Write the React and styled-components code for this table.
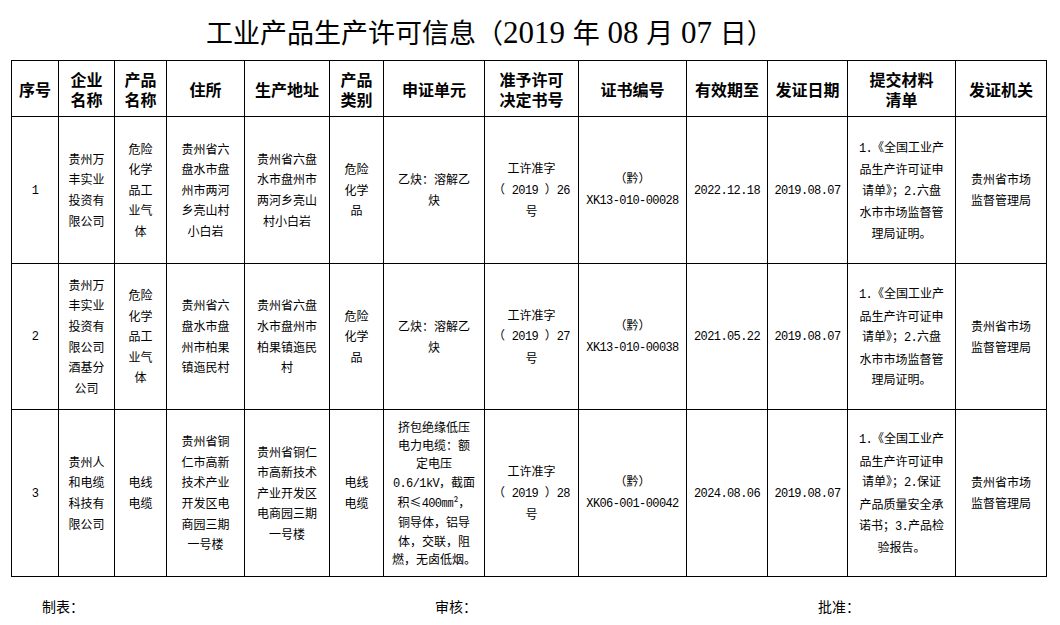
import React from "react";
import styled, { createGlobalStyle } from "styled-components";

const CJK = `"Noto Sans CJK SC", "Noto Sans", sans-serif`;
const COLS = [47, 56, 52, 78, 85, 54, 101, 94, 108, 81, 80, 108, 91];

const HEAD = [
  ["序号"],
  ["企业", "名称"],
  ["产品", "名称"],
  ["住所"],
  ["生产地址"],
  ["产品", "类别"],
  ["申证单元"],
  ["准予许可", "决定书号"],
  ["证书编号"],
  ["有效期至"],
  ["发证日期"],
  ["提交材料", "清单"],
  ["发证机关"],
];

const MATERIALS_LPS = ["1.《全国工业产", "品生产许可证申", "请单》；2.六盘", "水市市场监督管", "理局证明。"];
const AUTHORITY = ["贵州省市场", "监督管理局"];

const ROWS = [
  [
    ["1"],
    ["贵州万", "丰实业", "投资有", "限公司"],
    ["危险", "化学", "品工", "业气", "体"],
    ["贵州省六", "盘水市盘", "州市两河", "乡亮山村", "小白岩"],
    ["贵州省六盘", "水市盘州市", "两河乡亮山", "村小白岩"],
    ["危险", "化学", "品"],
    ["乙炔：溶解乙", "炔"],
    ["工许准字", "（ 2019 ）26", "号"],
    ["（黔）", "XK13-010-00028"],
    ["2022.12.18"],
    ["2019.08.07"],
    MATERIALS_LPS,
    AUTHORITY,
  ],
  [
    ["2"],
    ["贵州万", "丰实业", "投资有", "限公司", "酒基分", "公司"],
    ["危险", "化学", "品工", "业气", "体"],
    ["贵州省六", "盘水市盘", "州市柏果", "镇迤民村"],
    ["贵州省六盘", "水市盘州市", "柏果镇迤民", "村"],
    ["危险", "化学", "品"],
    ["乙炔：溶解乙", "炔"],
    ["工许准字", "（ 2019 ）27", "号"],
    ["（黔）", "XK13-010-00038"],
    ["2021.05.22"],
    ["2019.08.07"],
    MATERIALS_LPS,
    AUTHORITY,
  ],
  [
    ["3"],
    ["贵州人", "和电缆", "科技有", "限公司"],
    ["电线", "电缆"],
    ["贵州省铜", "仁市高新", "技术产业", "开发区电", "商园三期", "一号楼"],
    ["贵州省铜仁", "市高新技术", "产业开发区", "电商园三期", "一号楼"],
    ["电线", "电缆"],
    ["挤包绝缘低压", "电力电缆：额", "定电压", "0.6/1kV，截面", "积≤400㎜²，", "铜导体，铝导", "体，交联，阻", "燃，无卤低烟。"],
    ["工许准字", "（ 2019 ）28", "号"],
    ["（黔）", "XK06-001-00042"],
    ["2024.08.06"],
    ["2019.08.07"],
    ["1.《全国工业产", "品生产许可证申", "请单》；2.保证", "产品质量安全承", "诺书；3.产品检", "验报告。"],
    AUTHORITY,
  ],
];

// ascii runs get their own face (half-width digits in the sheet, Times-like in the title)
const split = (s, Wrap) =>
  s.split(/([\x20-\x7e]+)/).map((part, i) =>
    /^[\x20-\x7e]+$/.test(part) ? <Wrap key={i}>{part}</Wrap> : part
  );

export default function App() {
  return (
    <Page>
      <GlobalStyle />
      <Title>{split("工业产品生产许可信息（2019 年 08 月 07 日）", TitleNum)}</Title>
      <Sheet>
        {HEAD.map((lines, c) => (
          <HeadCell key={"h" + c}>
            {lines.map((l) => <Line key={l}>{l}</Line>)}
          </HeadCell>
        ))}
        {ROWS.map((row, r) =>
          row.map((lines, c) => (
            <Cell key={r + "-" + c} $tight={lines.length > 6}>
              {lines.map((l, i) => <Line key={i}>{split(l, Latin)}</Line>)}
            </Cell>
          ))
        )}
      </Sheet>
      <Footer>
        <span>制表：</span>
        <span>审核：</span>
        <span>批准：</span>
      </Footer>
    </Page>
  );
}

const GlobalStyle = createGlobalStyle`
  body {
    margin: 0;
    background: #fff;
    color: #000;
    font-family: ${CJK};
  }
`;

const Page = styled.div`
  width: 1060px;
  height: 625px;
  overflow: hidden;
`;

const Title = styled.h1`
  margin: 0;
  height: 60px;
  padding-left: 206px;
  font: 400 27px/63px "Noto Sans CJK SC", sans-serif;
  white-space: nowrap;
`;

const TitleNum = styled.span`
  font-family: "Liberation Serif", "DejaVu Serif", serif;
  font-size: 31px;
`;

const Sheet = styled.div`
  margin-left: 11px;
  width: max-content;
  display: grid;
  grid-template-columns: ${COLS.map((w) => w + "px").join(" ")};
  grid-template-rows: 56px 147px 146px 167px;
  border-top: 1px solid #000;
  border-left: 1px solid #000;
`;

const Cell = styled.div`
  box-sizing: border-box;
  border-right: 1px solid #000;
  border-bottom: 1px solid #000;
  display: flex;
  flex-direction: column;
  align-items: center;
  justify-content: center;
  text-align: center;
  font-size: 12px;
  line-height: ${(p) => (p.$tight ? "18.3px" : "20.6px")};
  white-space: nowrap;
  overflow: hidden;
`;

const HeadCell = styled(Cell)`
  font-size: 16px;
  font-weight: 700;
  line-height: 20px;
`;

const Line = styled.div``;

const Latin = styled.span`
  font-family: "Liberation Mono", "DejaVu Sans Mono", monospace;
  font-size: 12px;
  letter-spacing: -0.6px;
`;

const Footer = styled.div`
  display: grid;
  grid-template-columns: 393px 383px auto;
  padding-left: 42px;
  margin-top: 21px;
  font-size: 14px;
  line-height: 16px;
`;
